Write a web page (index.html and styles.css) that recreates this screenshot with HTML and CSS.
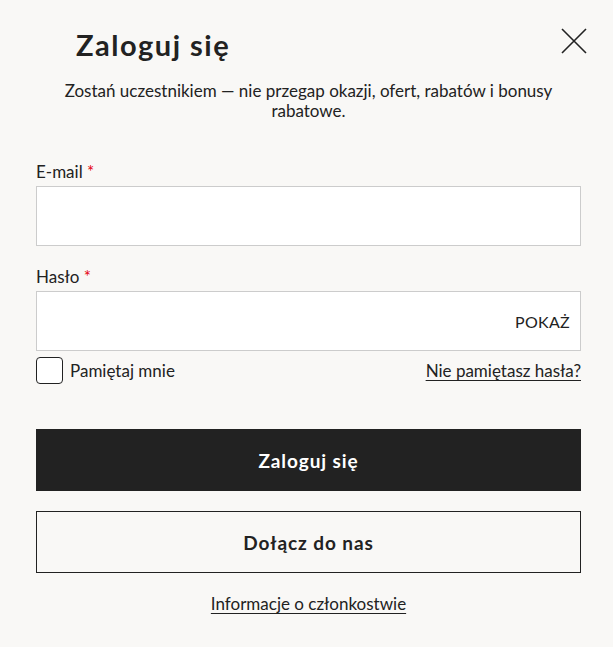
FILE: index.html
```html
<!DOCTYPE html>
<html lang="pl">
<head>
<meta charset="utf-8">
<link rel="stylesheet" href="styles.css">
</head>
<body>
<div class="modal">
  <div class="header">
    <h1 class="title">Zaloguj się</h1>
    <button class="close" aria-label="Zamknij">
      <svg width="26" height="26" viewBox="0 0 26 26"><path d="M1 1L25 25M25 1L1 25" stroke="#222" stroke-width="1.6" fill="none"/></svg>
    </button>
  </div>
  <p class="intro">Zostań uczestnikiem — nie przegap okazji, ofert, rabatów i bonusy rabatowe.</p>
  <form class="form">
    <div class="field">
      <label class="label">E-mail <span class="req">*</span></label>
      <div class="input"></div>
    </div>
    <div class="field">
      <label class="label">Hasło <span class="req">*</span></label>
      <div class="input pw"><span class="show">POKAŻ</span></div>
    </div>
    <div class="row">
      <label class="remember"><span class="box"></span>Pamiętaj mnie</label>
      <a class="link" href="#">Nie pamiętasz hasła?</a>
    </div>
    <button type="button" class="btn primary">Zaloguj się</button>
    <button type="button" class="btn secondary">Dołącz do nas</button>
    <div class="info"><a class="link" href="#">Informacje o członkostwie</a></div>
  </form>
</div>
</body>
</html>
```
FILE: styles.css
```css
html, body { margin: 0; padding: 0; }
body {
  background: #f9f8f6;
  color: #222;
  font-family: "Lato", "Open Sans", sans-serif;
  width: 613px;
  height: 647px;
  overflow: hidden;
}
.modal { padding: 0 32px 0 36px; }
.header {
  display: flex;
  justify-content: space-between;
  align-items: flex-start;
  padding-top: 28px;
}
.title {
  margin: 0 0 0 40px;
  font-size: 29px;
  font-weight: 700;
  line-height: 34px;
  letter-spacing: 1.5px;
}
.close {
  background: none;
  border: 0;
  padding: 0;
  margin: 0 -6px 0 0;
  width: 26px;
  height: 26px;
  cursor: pointer;
}
.intro {
  margin: 19px 0 0;
  text-align: center;
  font-size: 17px;
  line-height: 20px;
  padding: 0 10px;
}
.form { margin-top: 41px; }
.field { margin-bottom: 21px; }
.label {
  display: block;
  font-size: 17px;
  line-height: 20px;
  margin-bottom: 4px;
}
.req { color: #e50010; }
.input {
  height: 58px;
  background: #fff;
  border: 1px solid #ccc;
  display: flex;
  align-items: center;
  justify-content: flex-end;
  padding: 0 10px;
}
.show { font-size: 16px; letter-spacing: 0.3px; }
.row {
  margin-top: -15px;
  display: flex;
  justify-content: space-between;
  align-items: center;
  height: 27px;
}
.remember {
  display: flex;
  align-items: center;
  gap: 7px;
  font-size: 17px;
}
.box {
  width: 25px;
  height: 25px;
  border: 1px solid #222;
  border-radius: 4px;
  background: #fff;
}
.link {
  color: #222;
  font-size: 17px;
  text-decoration: underline;
  text-underline-offset: 3px;
}
.btn {
  display: block;
  width: 100%;
  height: 62px;
  font-family: inherit;
  font-size: 19px;
  font-weight: 700;
  letter-spacing: 0.9px;
  cursor: pointer;
}
.primary {
  margin-top: 45px;
  background: #222;
  color: #fff;
  border: 0;
}
.secondary {
  margin-top: 20px;
  background: transparent;
  color: #222;
  border: 1px solid #222;
}
.info {
  text-align: center;
  margin-top: 20px;
}
```
